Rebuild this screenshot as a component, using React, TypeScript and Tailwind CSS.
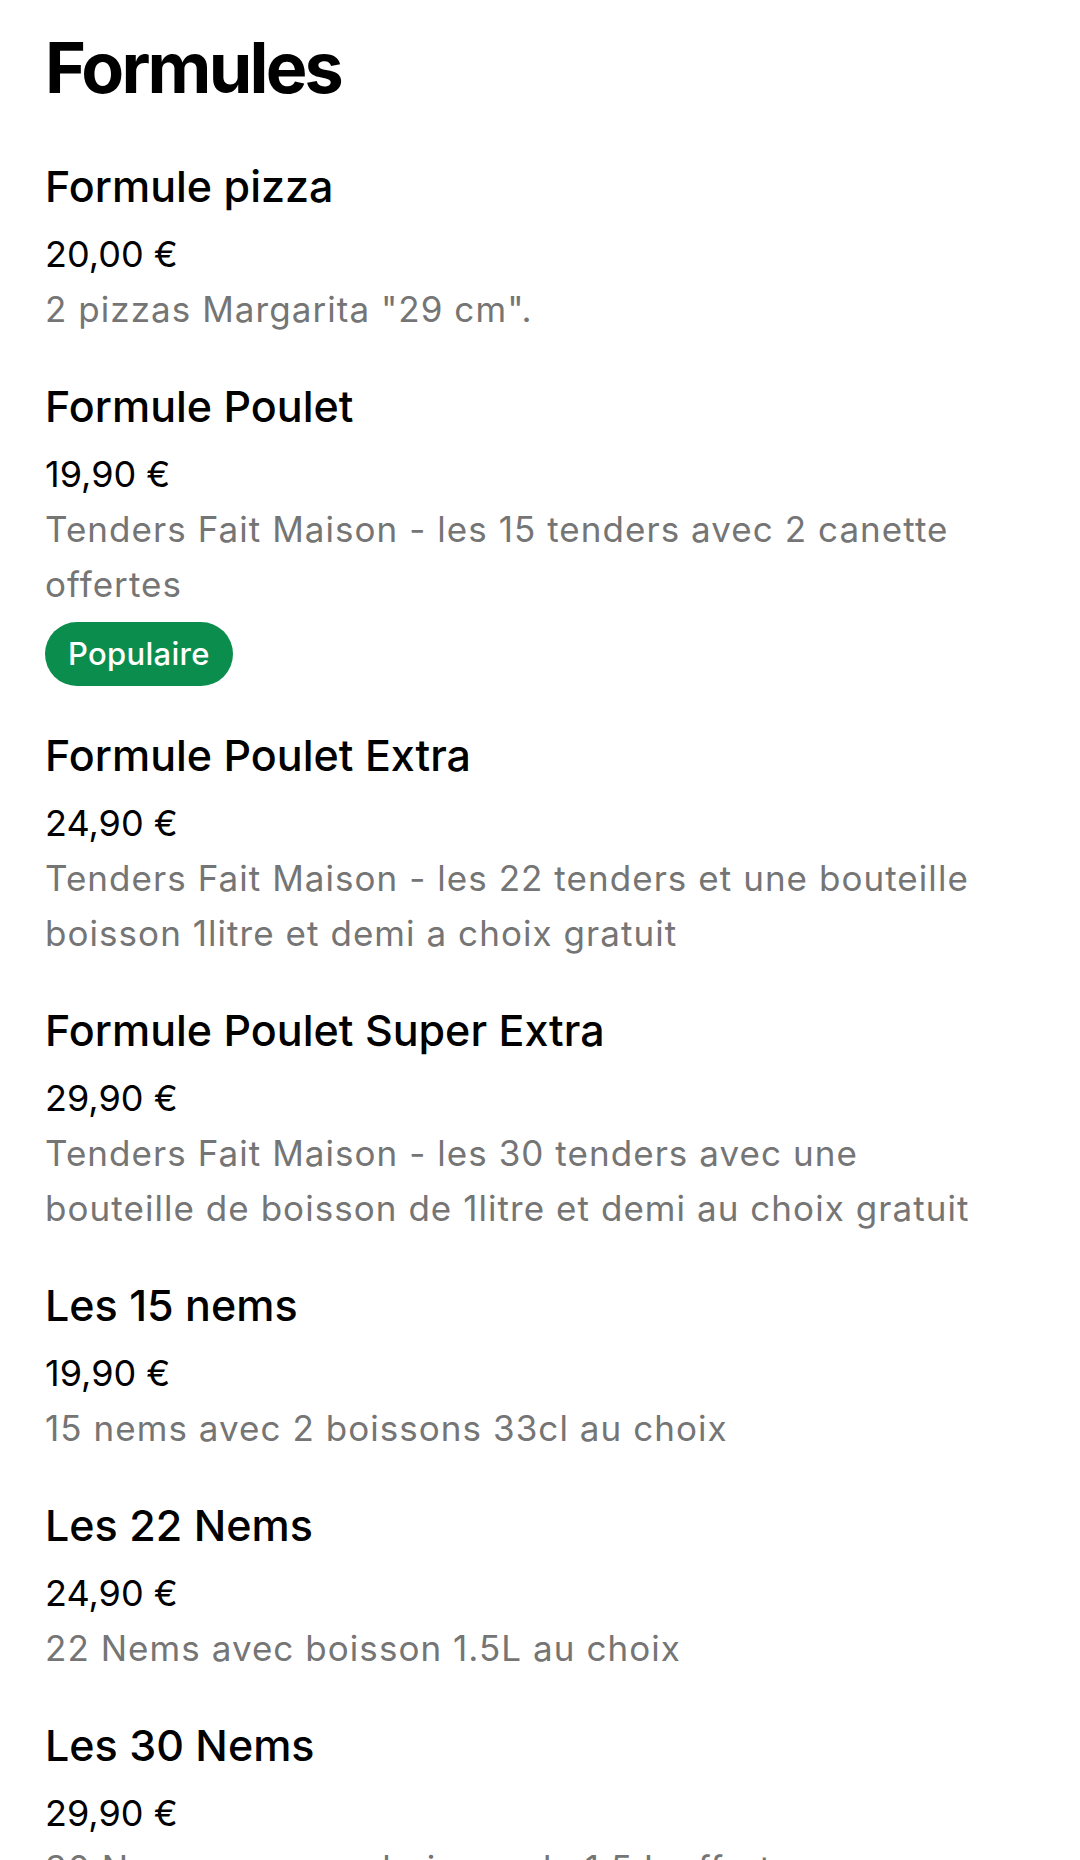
const ITEMS = [
  { name: 'Formule pizza', price: '20,00 €', desc: '2 pizzas Margarita "29 cm".' },
  {
    name: 'Formule Poulet',
    price: '19,90 €',
    desc: 'Tenders Fait Maison - les 15 tenders avec 2 canette offertes',
    badge: 'Populaire',
  },
  {
    name: 'Formule Poulet Extra',
    price: '24,90 €',
    desc: 'Tenders Fait Maison - les 22 tenders et une bouteille boisson 1litre et demi a choix gratuit',
  },
  {
    name: 'Formule Poulet Super Extra',
    price: '29,90 €',
    desc: 'Tenders Fait Maison - les 30 tenders avec une bouteille de boisson de 1litre et demi au choix gratuit',
  },
  { name: 'Les 15 nems', price: '19,90 €', desc: '15 nems avec 2 boissons 33cl au choix' },
  { name: 'Les 22 Nems', price: '24,90 €', desc: '22 Nems avec boisson 1.5L au choix' },
  { name: 'Les 30 Nems', price: '29,90 €', desc: '30 Nems avec une boisson de 1.5 L offerte' },
];

export default function App() {
  return (
    <div className="w-[1080px] h-[1860px] overflow-hidden bg-white px-[45px] pt-[26px] font-['Inter',sans-serif] text-black">
      <h1 className="text-[70px] leading-[84px] font-bold tracking-[-0.04em]">Formules</h1>

      <div className="mt-[48px] flex flex-col gap-[41px]">
        {ITEMS.map((item) => (
          <div key={item.name} className="flex flex-col">
            <div className="text-[43px] leading-[56px] font-medium">{item.name}</div>
            <div className="mt-[12px] text-[36px] leading-[56px]">{item.price}</div>
            <div className="text-[35px] leading-[55px] text-[#757575] tracking-[0.03em] max-w-[950px]">{item.desc}</div>
            {item.badge && (
              <div className="mt-[10px]">
                <span className="inline-flex h-[64px] items-center rounded-full bg-[#0b8e4d] px-[23px] text-[31px] font-medium tracking-[0.01em] text-white">
                  {item.badge}
                </span>
              </div>
            )}
          </div>
        ))}
      </div>
    </div>
  );
}
